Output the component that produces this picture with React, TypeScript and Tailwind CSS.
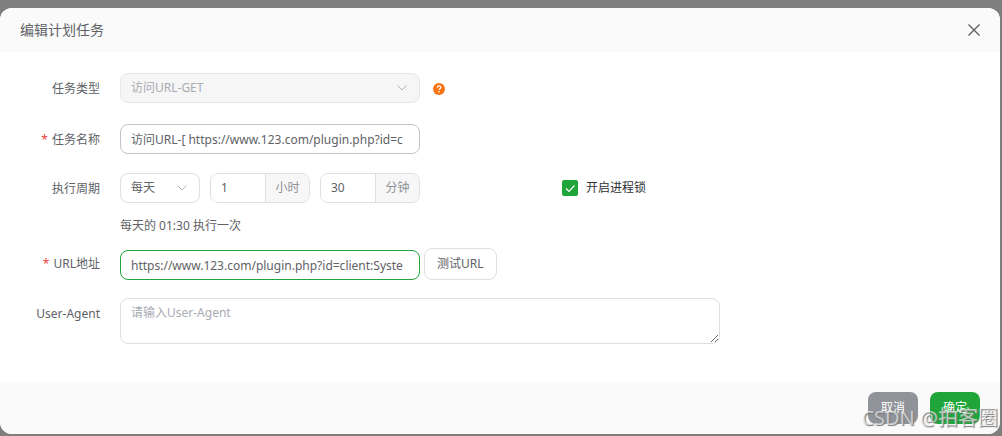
import React, { useState } from 'react';

const FIELD = 'h-[30px] rounded-lg border px-2.5 outline-none';

interface FormRowProps {
  label: string;
  htmlFor: string;
  required?: boolean;
  className?: string;
  children: React.ReactNode;
}

const FormRow: React.FC<FormRowProps> = ({ label, htmlFor, required, className = '', children }) => (
  <div className={`flex items-start ${className}`}>
    <label htmlFor={htmlFor} className="w-[100px] shrink-0 text-right leading-8">
      {required && <span className="mr-1 text-[#ef4444]">*</span>}
      {label}
    </label>
    <div className="ml-5 flex min-w-0 flex-1 items-end">{children}</div>
  </div>
);

const Chevron = () => (
  <svg className="pointer-events-none absolute right-3 top-[10px]" width="12" height="10" viewBox="0 0 12 10" fill="none" stroke="#b1b4bb">
    <path d="M1.5 2.5 6 7l4.5-4.5" />
  </svg>
);

interface UnitInputProps {
  id: string;
  label: string;
  unit: string;
  value: string;
  onChange: (value: string) => void;
}

const UnitInput: React.FC<UnitInputProps> = ({ id, label, unit, value, onChange }) => (
  <div className="ml-2.5 flex h-[30px] w-[100px] overflow-hidden rounded-lg border border-[#dcdfe6]">
    <input
      id={id}
      aria-label={label}
      value={value}
      onChange={e => onChange(e.target.value)}
      className="min-w-0 flex-1 bg-white px-2.5 text-[#606266] outline-none"
    />
    <span className="w-11 border-l border-[#dcdfe6] bg-[#f7f7f7] text-center leading-7 text-[#909399]">{unit}</span>
  </div>
);

export default function App() {
  const [name, setName] = useState('访问URL-[ https://www.123.com/plugin.php?id=c');
  const [hour, setHour] = useState('1');
  const [minute, setMinute] = useState('30');
  const [url, setUrl] = useState('https://www.123.com/plugin.php?id=client:Syste');
  const [agent, setAgent] = useState('');
  const [locked, setLocked] = useState(true);

  return (
    <div className="relative min-h-screen bg-[#7e7e7e] pt-2 pr-0.5 pb-0.5 font-['Noto_Sans','Noto_Sans_CJK_SC',sans-serif] text-xs text-[#606266]">
      <div role="dialog" aria-labelledby="dialog-title" className="overflow-hidden rounded-xl bg-white">
        <header className="flex h-11 items-center justify-between bg-[#fafafa] px-5">
          <h1 id="dialog-title" className="text-sm">编辑计划任务</h1>
          <button type="button" aria-label="关闭">
            <svg width="12" height="12" viewBox="0 0 12 12" fill="none" stroke="#606266" strokeWidth="1.4">
              <path d="M.5.5l11 11M11.5.5l-11 11" />
            </svg>
          </button>
        </header>

        <form className="pt-[21px] pb-[38px]">
          <FormRow label="任务类型" htmlFor="type">
            <div className="relative">
              <select
                id="type"
                disabled
                className={`${FIELD} w-[300px] appearance-none border-[#e4e7ed] bg-[#f6f6f6] text-[#a8abb2] opacity-100`}
              >
                <option>访问URL-GET</option>
              </select>
              <Chevron />
            </div>
            <button type="button" aria-label="帮助" className="ml-[13px] pb-2">
              <svg width="12" height="12" viewBox="0 0 12 12" fill="none">
                <circle cx="6" cy="6" r="6" fill="#f87414" />
                <path d="M4.3 4.7c0-2.4 3.5-2.2 3.5-.3C7.8 5.7 6 5.6 6 7" stroke="#fff" strokeWidth="1.2" />
                <circle cx="6" cy="8.8" r=".8" fill="#fff" />
              </svg>
            </button>
          </FormRow>

          <FormRow label="任务名称" htmlFor="name" required className="mt-[19px]">
            <input
              id="name"
              value={name}
              onChange={e => setName(e.target.value)}
              className={`${FIELD} w-[300px] border-[#c0c4cc]`}
            />
          </FormRow>

          <FormRow label="执行周期" htmlFor="cycle" className="mt-[17px]">
            <div className="relative">
              <select id="cycle" className={`${FIELD} w-20 appearance-none border-[#dcdfe6]`}>
                <option>每天</option>
                <option>每周</option>
                <option>每月</option>
              </select>
              <Chevron />
            </div>
            <UnitInput id="hour" label="小时" unit="小时" value={hour} onChange={setHour} />
            <UnitInput id="minute" label="分钟" unit="分钟" value={minute} onChange={setMinute} />
            <label className="ml-[142px] flex h-[30px] items-center gap-2 text-[#303133]">
              <span className="relative flex">
                <input
                  type="checkbox"
                  checked={locked}
                  onChange={e => setLocked(e.target.checked)}
                  className="peer size-4 appearance-none rounded-xs border border-[#dcdfe6] checked:border-[#20a53a] checked:bg-[#20a53a]"
                />
                <svg
                  className="pointer-events-none absolute inset-0 hidden peer-checked:block"
                  width="16"
                  height="16"
                  viewBox="0 0 16 16"
                  fill="none"
                  stroke="#fff"
                  strokeWidth="1.2"
                >
                  <path d="M4 8.5l3 3 5.5-6" />
                </svg>
              </span>
              开启进程锁
            </label>
          </FormRow>
          <p className="ml-[120px] mt-[11px] leading-5">每天的 01:30 执行一次</p>

          <FormRow label="URL地址" htmlFor="url" required className="mt-3">
            <input
              id="url"
              value={url}
              onChange={e => setUrl(e.target.value)}
              className={`${FIELD} w-[300px] border-[#20a53a]`}
            />
            <button type="button" className="ml-1 h-8 rounded-lg border border-[#dcdfe6] px-3">
              测试URL
            </button>
          </FormRow>

          <FormRow label="User-Agent" htmlFor="agent" className="mt-[18px]">
            <textarea
              id="agent"
              value={agent}
              onChange={e => setAgent(e.target.value)}
              placeholder="请输入User-Agent"
              className="h-[46px] w-[600px] rounded-lg border border-[#dcdfe6] px-2.5 py-1 leading-5 outline-none placeholder:text-[#a8abb2]"
            />
          </FormRow>
        </form>

        <footer className="flex h-[52px] items-center justify-end gap-3 bg-[#fafafa] px-5">
          <button type="button" className="h-8 w-[50px] rounded-lg bg-[#909399] text-white">取消</button>
          <button type="button" className="h-8 w-[50px] rounded-lg bg-[#20a53a] text-white">确定</button>
        </footer>
      </div>

      <span className="pointer-events-none absolute right-1 bottom-1 text-xl leading-7 text-white/60 [text-shadow:1px_1px_1px_#777]">
        CSDN @拍客圈
      </span>
    </div>
  );
}
